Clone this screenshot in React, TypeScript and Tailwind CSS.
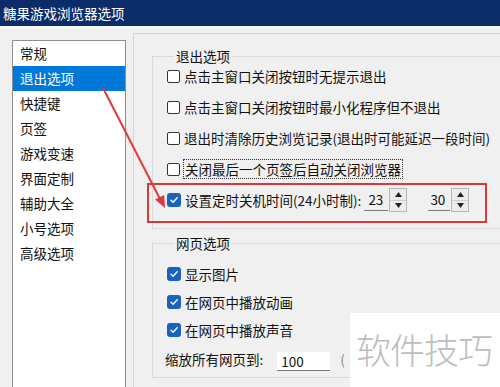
import React from "react";

const FONT = { fontFamily: '"Noto Sans CJK SC", "Noto Sans", sans-serif' };

function Box({ checked }: { checked?: boolean }) {
  return checked ? (
    <span className="w-[14px] h-[14px] rounded-[3px] bg-[#1a62c0] flex items-center justify-center shrink-0">
      <svg width="10" height="10" viewBox="0 0 10 10">
        <path d="M2 5.3 L4.1 7.3 L8.2 2.8" stroke="white" strokeWidth="1.4" fill="none" strokeLinecap="round" strokeLinejoin="round" />
      </svg>
    </span>
  ) : (
    <span className="w-[13px] h-[13px] rounded-[2px] border border-[#333] bg-white shrink-0" />
  );
}

function Row({ checked, children, focus }: { checked?: boolean; children: React.ReactNode; focus?: boolean }) {
  return (
    <div className="h-[22px] flex items-center gap-[3px]">
      <Box checked={checked} />
      {focus ? (
        <span className="border border-dotted border-[#333] px-[1px] leading-[18px]">{children}</span>
      ) : (
        <span className="pl-[1px]">{children}</span>
      )}
    </div>
  );
}

function Spin({ value, boxClass }: { value: string; boxClass: string }) {
  return (
    <div className="flex items-center">
      <div className={boxClass}>{value}</div>
      <div className="ml-[1px] w-[18px] h-[24px] border border-[#b8b8b8] bg-[#ececec] flex flex-col">
        <div className="flex-1 flex items-center justify-center border-b border-[#cfcfcf]">
          <svg width="7" height="5" viewBox="0 0 7 5">
            <path d="M0 5 L3.5 0 L7 5 Z" fill="#222" />
          </svg>
        </div>
        <div className="flex-1 flex items-center justify-center">
          <svg width="7" height="5" viewBox="0 0 7 5">
            <path d="M0 0 L3.5 5 L7 0 Z" fill="#222" />
          </svg>
        </div>
      </div>
    </div>
  );
}

const navItems = ["常规", "退出选项", "快捷键", "页签", "游戏变速", "界面定制", "辅助大全", "小号选项", "高级选项"];

export default function App() {
  return (
    <div className="relative w-[500px] h-[387px] overflow-hidden bg-[#f0f0f0] text-[13.5px] text-[#111]" style={FONT}>
      <div className="h-[26px] bg-[#0b2c69] text-white flex items-center pl-[3px] text-[13.5px]">糖果游戏浏览器选项</div>
      <div className="h-[2px] bg-[#fafafa]" />
      <div className="flex">
        <div className="w-[133px] shrink-0 pl-[12px] pt-[12px]">
          <div className="w-[114px] h-[360px] bg-white border border-[#8e8e8e] flex flex-col">
            {navItems.map((t, i) => (
              <div
                key={t}
                className={
                  i === 1
                    ? "h-[25px] flex items-center pl-[7px] bg-[#0078d7] text-white"
                    : "h-[25px] flex items-center pl-[7px]"
                }
              >
                {t}
              </div>
            ))}
          </div>
        </div>
        <div className="flex-1 mt-[5px] h-[360px] border-l border-t border-[#d6d6d6] pl-[18px] pt-[13px]">
          <fieldset className="w-[400px] border border-[#d9d9d9] pl-[14px] pb-[17px]">
            <legend className="ml-[7px] px-[2px] leading-[18px]">退出选项</legend>
            <div className="flex flex-col gap-[9px] pt-0">
              <Row>点击主窗口关闭按钮时无提示退出</Row>
              <Row>点击主窗口关闭按钮时最小化程序但不退出</Row>
              <Row>退出时清除历史浏览记录(退出时可能延迟一段时间)</Row>
              <Row focus>关闭最后一个页签后自动关闭浏览器</Row>
              <div className="h-[22px] flex items-center">
                <Box checked />
                <span className="pl-[4px]">设置定时关机时间(24小时制):</span>
                <div className="ml-[3px]">
                  <Spin value="23" boxClass="w-[24px] h-[22px] border-b border-[#7a7a7a] flex items-center pl-[4px]" />
                </div>
                <div className="ml-[21px]">
                  <Spin value="30" boxClass="w-[22px] h-[22px] border-b border-[#7a7a7a] flex items-center pl-[2px]" />
                </div>
              </div>
            </div>
          </fieldset>
          <fieldset className="mt-[5px] w-[400px] border border-[#d9d9d9] pl-[14px] pb-[7px]">
            <legend className="ml-[7px] px-[2px] leading-[18px]">网页选项</legend>
            <div className="flex flex-col gap-[6px] pt-[11px]">
              <Row checked>显示图片</Row>
              <Row checked>在网页中播放动画</Row>
              <Row checked>在网页中播放声音</Row>
              <div className="mt-[1px] h-[22px] flex items-center -ml-[2px]">
                <span>缩放所有网页到:</span>
                <div className="ml-[14px] w-[53px] h-[19px] mt-[5px] bg-white border-b border-[#7a7a7a] flex items-center pl-[4px]">100</div>
                <span className="ml-[10px] text-[#888]">(</span>
              </div>
            </div>
          </fieldset>
        </div>
      </div>

      {/* red annotation rectangle */}
      <div className="absolute left-[147px] top-[183px] w-[340px] h-[40px] border-2 border-[#d9383a]" />

      {/* red arrow */}
      <svg className="absolute left-0 top-0 pointer-events-none" width="500" height="387">
        <line x1="103" y1="88" x2="159.5" y2="198" stroke="#e03a3e" strokeWidth="2" />
        <polygon points="165,208 164.2,195 155,199.6" fill="#e03a3e" />
      </svg>

      {/* watermark */}
      <div className="absolute left-[350px] top-[313px] w-[150px] h-[74px] bg-white flex items-start pt-[16px] pl-[6px]">
        <span className="text-[35px] leading-[40px] text-[#bdbdbd] font-light tracking-[-1px]">软件技巧</span>
      </div>
    </div>
  );
}
